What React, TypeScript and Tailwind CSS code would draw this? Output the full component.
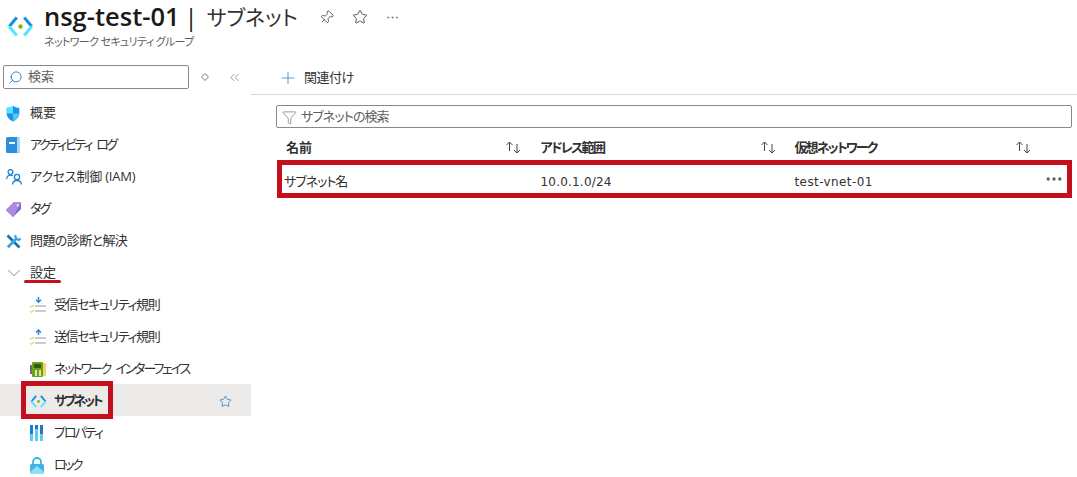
import { ChevronDown, ChevronsLeft, Ellipsis, Filter, Pin, Plus, Search, Star } from "lucide-react";
import type { ReactNode } from "react";

const font = "font-['Open_Sans','Noto_Sans_CJK_JP',sans-serif] [font-feature-settings:'palt']";

function SubnetIcon({ size }: { size: number }) {
  return (
    <svg width={size} height={size} viewBox="0 0 18 18" fill="none">
      <path d="M6.500 3 1.500 9" stroke="#1490df" strokeWidth="2" />
      <path d="M1.500 9l5 6" stroke="#50e6ff" strokeWidth="2" />
      <path d="M11.500 3l5 6" stroke="#1490df" strokeWidth="2" />
      <path d="M16.500 9l-5 6" stroke="#50e6ff" strokeWidth="2" />
      <circle cx="9" cy="9" r="1.500" fill="#7fba00" />
    </svg>
  );
}

function Shield() {
  return (
    <svg width="14" height="17" viewBox="0 0 16 18">
      <path d="M8 0C6 1.600 3.500 2.300.8 2.300V9c0 4 3 7 7.200 9 4.200-2 7.200-5 7.200-9V2.300C12.500 2.300 10 1.600 8 0Z" fill="#1b93eb" />
      <path d="M8 0v9H.8V2.300C3.500 2.300 6 1.600 8 0Z" fill="#50e6ff" />
      <path d="M8 9h7.200c0 4-3 7-7.200 9Z" fill="#50c8ef" />
    </svg>
  );
}

function LogBook() {
  return (
    <svg width="14" height="16" viewBox="0 0 14 16">
      <rect width="14" height="16" rx="1.500" fill="#2b8fe0" />
      <rect x="11" width="3" height="16" rx="1" fill="#a9d8f5" />
      <rect x="3" y="5" width="6" height="2" fill="#fff" />
    </svg>
  );
}

function People() {
  return (
    <svg width="17" height="16" viewBox="0 0 17 16" fill="none" stroke="#1f7fd8" strokeWidth="1.300">
      <circle cx="4.500" cy="3" r="2.400" />
      <path d="M.6 10c.4-2.500 1.800-3.800 3.900-3.800 1 0 1.700.2 2.300.6" />
      <circle cx="11" cy="8" r="2.600" />
      <path d="M6.500 15.500c.3-2.600 2-4 4.500-4s4.200 1.400 4.500 4" />
    </svg>
  );
}

function Tag() {
  return (
    <svg width="15" height="15" viewBox="0 0 15 15">
      <path d="M8 0h6a1 1 0 0 1 1 1v6l-8 8L0 8Z" fill="#8661c5" />
      <path d="M8 0h6a1 1 0 0 1 1 1L7 15 0 8Z" fill="#a98ce0" />
      <circle cx="11.800" cy="3.200" r="1.200" fill="#e6dcf7" />
    </svg>
  );
}

function Tools() {
  return (
    <svg width="15" height="15" viewBox="0 0 15 15" fill="none">
      <path d="M1.500 1.500 13.500 13.500" stroke="#1b6ea8" strokeWidth="2.600" />
      <path d="M1.800 13.300 10.500 4.500" stroke="#32a8e0" strokeWidth="2.800" />
      <path d="M9 1.200 10 4 12.500 6l2.300-1.200" stroke="#32a8e0" strokeWidth="2.200" />
    </svg>
  );
}

function RuleIcon({ up }: { up?: boolean }) {
  return (
    <svg width="17" height="16" viewBox="0 0 17 16" fill="none">
      <path d={up ? "M8.500 6V1M6 3.500l2.500-2.500 2.500 2.500" : "M8.500 0v5M6 2.800l2.500 2.500 2.500-2.500"} stroke="#2b88d8" strokeWidth="1.500" />
      <path d="M5 9h11M5 14h11" stroke="#9a9a9a" strokeWidth="1.200" />
      <path d="M0 9 1.300 10.300 4 8M0 14 1.300 15.300 4 13" stroke="#b4d23c" />
    </svg>
  );
}

function Nic() {
  return (
    <svg width="16" height="15" viewBox="0 0 16 15">
      <rect y="3" width="2" height="9" fill="#6b6b6b" />
      <rect x="2" width="11" height="15" rx="1" fill="#6fa01c" />
      <rect x="13" y="1" width="3" height="13" rx="1" fill="#f2d64b" />
      <rect x="4" y="2" width="7" height="4" fill="#2f5e12" />
      <rect x="5" y="8" width="2" height="6" fill="#d7e8ae" />
      <rect x="9" y="8" width="2" height="6" fill="#d7e8ae" />
    </svg>
  );
}

function Props() {
  return (
    <svg width="13" height="16" viewBox="0 0 13 16">
      <path d="M0 0h3v9H0Z" fill="#1b78d0" />
      <path d="M0 9h3v7H0Z" fill="#5ecdf5" />
      <path d="M5 0h3v4H5Z" fill="#1b78d0" />
      <path d="M5 4h3v12H5Z" fill="#5ecdf5" />
      <path d="M10 0h3v9h-3Z" fill="#1b78d0" />
      <path d="M10 9h3v7h-3Z" fill="#5ecdf5" />
    </svg>
  );
}

function Lock() {
  return (
    <svg width="14" height="17" viewBox="0 0 14 17">
      <path d="M3 8V5a4 4 0 0 1 8 0v3" fill="none" stroke="#32b8e8" strokeWidth="1.800" />
      <rect y="7" width="14" height="10" rx="1.500" fill="#42b4e0" />
      <path d="M0 15 7 9l7 6v.5a1.500 1.500 0 0 1-1.500 1.500h-11A1.500 1.500 0 0 1 0 15.500Z" fill="#8fe0f7" />
    </svg>
  );
}

function SortArrows() {
  return (
    <svg width="17" height="13" viewBox="0 0 17 13" fill="none" stroke="#444" strokeWidth="1">
      <path d="M4.500 10V1M1.500 4l3-3 3 3" />
      <path d="M12 3v9M9 9l3 3 3-3" />
    </svg>
  );
}

function NavItem({ icon, label, sub, tracking }: { icon: ReactNode; label: string; sub?: boolean; tracking?: string }) {
  return (
    <div className={`flex h-8 items-center pt-[2px] text-[13px] text-[#323130] ${sub ? "pl-[30px]" : "pl-[6px]"}`}>
      <span className="flex w-6 shrink-0 items-center">{icon}</span>
      <span className={tracking}>{label}</span>
    </div>
  );
}

export default function App() {
  return (
    <div className={`h-[477px] w-[1077px] overflow-hidden bg-white ${font}`}>
      <header className="flex h-[52px] pl-[7px]">
        <div className="pt-[13px]">
          <SubnetIcon size={27} />
        </div>
        <div className="ml-[10px]">
          <div className="flex h-[34px] items-center">
            <h1 className="text-[25.500px] font-semibold leading-none text-[#1b1a19]">nsg-test-01</h1>
            <span className="ml-[5px] text-[24px] leading-none text-[#1b1a19]">|</span>
            <span className="ml-[9px] text-[21px] leading-none text-[#323130]">サブネット</span>
            <Pin size={15} strokeWidth={1.200} className="ml-[21px] rotate-45 text-[#323130]" />
            <Star size={16} strokeWidth={1.200} className="ml-[18px] text-[#323130]" />
            <Ellipsis size={15} strokeWidth={1} className="ml-[17px] text-[#605e5c]" />
          </div>
          <p className="text-[11px] leading-[15px] tracking-[-0.650px] text-[#605e5c]">ネットワーク セキュリティ グループ</p>
        </div>
      </header>
      <div className="flex">
        <aside className="relative w-[251px] shrink-0 pt-[13px]">
          <div className="flex h-[24px] items-center">
            <div className="ml-[3px] flex h-[24px] w-[186px] items-center rounded-[2px] border border-[#8a8886] pl-[4px] text-[13px] text-[#605e5c]">
              <Search size={15} strokeWidth={1.300} className="-scale-x-100 text-[#0f6cbd]" />
              <span className="ml-[5px]">検索</span>
            </div>
            <span className="ml-[13px] h-[6px] w-[6px] rotate-45 rounded-[1px] border border-[#a19f9d]" />
            <ChevronsLeft size={15} strokeWidth={1} className="ml-[19px] text-[#605e5c]" />
          </div>
          <nav className="mt-[7px]">
            <NavItem icon={<Shield />} label="概要" />
            <NavItem icon={<LogBook />} label="アクティビティ ログ" tracking="tracking-[-2.300px] [word-spacing:4px]" />
            <NavItem icon={<People />} label="アクセス制御 (IAM)" tracking="tracking-[-0.200px]" />
            <NavItem icon={<Tag />} label="タグ" tracking="tracking-[-2px]" />
            <NavItem icon={<Tools />} label="問題の診断と解決" tracking="tracking-[-0.600px]" />
            <div className="relative flex h-8 items-center pt-[2px] pl-[6px] text-[13px] text-[#323130]">
              <span className="flex w-6 items-center">
                <ChevronDown size={22} strokeWidth={0.800} className="-ml-[3px] text-[#605e5c]" />
              </span>
              設定
              <span className="absolute left-[24px] top-[24px] h-[3px] w-[37px] rounded-full bg-[#c50f1f]" />
            </div>
            <NavItem sub icon={<RuleIcon />} label="受信セキュリティ規則" tracking="tracking-[-1.400px]" />
            <NavItem sub icon={<RuleIcon up />} label="送信セキュリティ規則" tracking="tracking-[-1.400px]" />
            <NavItem sub icon={<Nic />} label="ネットワーク インターフェイス" tracking="tracking-[-2.100px] [word-spacing:4px]" />
            <div className="relative flex h-8 items-center bg-[#edebe9] pt-[2px] pl-[30px] text-[13px] font-semibold text-[#323130]">
              <span className="flex w-6 items-center">
                <SubnetIcon size={17} />
              </span>
              <span className="tracking-[-2.400px]">サブネット</span>
              <Star size={13} strokeWidth={1.300} className="absolute left-[219px] top-[11px] text-[#0f6cbd]" />
              <span className="absolute left-[21px] top-[-3px] h-[38px] w-[92px] border-[5px] border-[#c50f1f]" />
            </div>
            <NavItem sub icon={<Props />} label="プロパティ" tracking="tracking-[-2px]" />
            <NavItem sub icon={<Lock />} label="ロック" tracking="tracking-[-2.500px]" />
          </nav>
        </aside>
        <main className="w-[826px] pt-[8px]">
          <div className="flex h-[35px] items-center border-b border-[#d9d9d9] pl-[27px] pt-[2px] text-[13px] text-[#323130]">
            <Plus size={20} strokeWidth={1.100} className="text-[#3f94dc]" />
            <span className="ml-[6px] tracking-[-0.500px]">関連付け</span>
          </div>
          <div className="ml-[25px] mt-[10px] flex h-[23px] w-[796px] items-center rounded-[2px] border border-[#8a8886] pl-[5px] pt-[1px] text-[13px] text-[#605e5c]">
            <Filter size={15} strokeWidth={1} className="text-[#605e5c]" />
            <span className="ml-[4px] tracking-[-0.900px]">サブネットの検索</span>
          </div>
          <div className="ml-[26px] mt-[2px] flex h-[30px] w-[795px] items-center pt-[5px] text-[13px] font-semibold text-[#323130]">
            <div className="flex w-[254.500px] items-center justify-between pl-[9px] pr-[10px]">
              名前
              <SortArrows />
            </div>
            <div className="flex w-[255px] items-center justify-between pl-[9px] pr-[10px]">
              <span className="tracking-[-1.700px]">アドレス範囲</span>
              <SortArrows />
            </div>
            <div className="flex w-[255px] items-center justify-between pl-[8px] pr-[10px]">
              <span className="tracking-[-1.900px]">仮想ネットワーク</span>
              <SortArrows />
            </div>
          </div>
          <div className="ml-[26px] flex h-[38px] w-[795px] items-center border-[5px] border-[#c50f1f] text-[#323130]">
            <span className="mt-[6px] w-[254.500px] pl-[2px] text-[13px] tracking-[-1px]">サブネット名</span>
            <span className="mt-[6px] w-[255px] pl-[4px] font-['DejaVu_Sans'] text-[12px] tracking-[0.200px]">10.0.1.0/24</span>
            <span className="mt-[6px] flex-1 pl-[3px] font-['DejaVu_Sans'] text-[12px] tracking-[0.400px]">test-vnet-01</span>
            <Ellipsis size={20} strokeWidth={2} className="mr-[3px] text-[#605e5c]" />
          </div>
        </main>
      </div>
    </div>
  );
}
